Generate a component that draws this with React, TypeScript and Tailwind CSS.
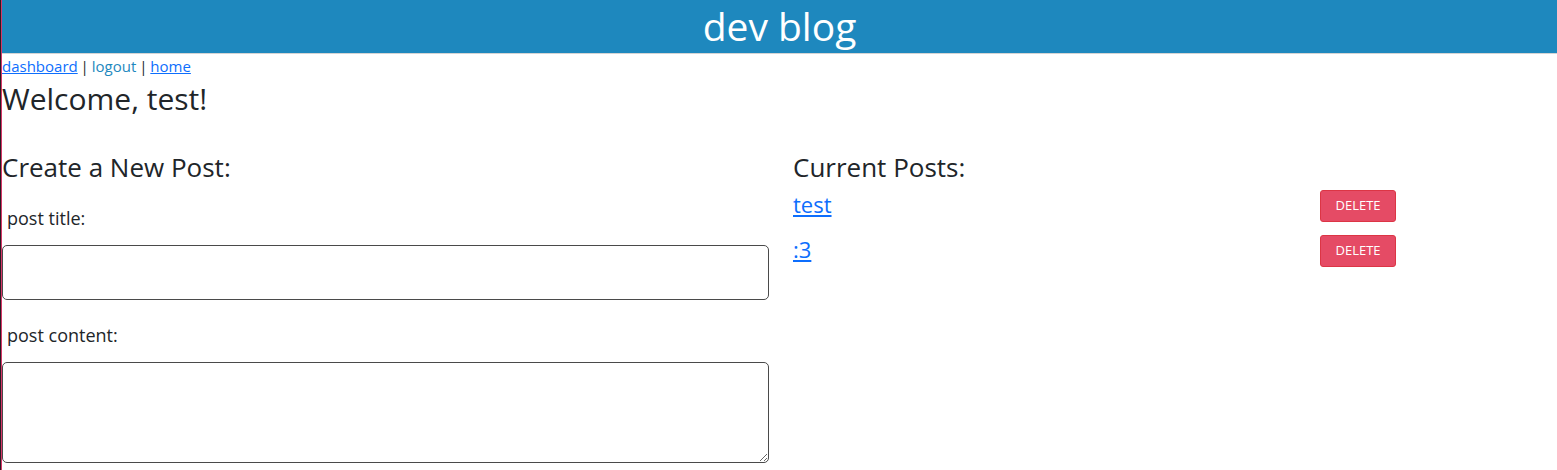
import React from "react";

const posts = [
  { id: 1, title: "test" },
  { id: 2, title: ":3" },
];

export default function App() {
  return (
    <div
      className="min-h-[470px] border-l border-[#2a1a22] bg-white text-[#212529]"
      style={{ fontFamily: '"Open Sans", "Noto Sans", sans-serif' }}
    >
      <div className="min-h-[470px] border-l border-[#d63868]">
        {/* Header */}
        <header className="h-[54px] border-b border-[#d4d4d4] bg-[#1e88be] text-center text-[39px] leading-[52px] text-white">
          dev blog
        </header>

        {/* Nav */}
        <nav className="text-[15px] leading-[24px] [word-spacing:-1px]">
          <a href="#" className="text-[#0d6efd] underline">
            dashboard
          </a>{" "}
          | <span className="text-[#1e88be]">logout</span> |{" "}
          <a href="#" className="text-[#0d6efd] underline">
            home
          </a>
        </nav>

        <h2 className="pt-[2px] text-[30px] leading-[38px]">Welcome, test!</h2>

        <div className="mt-[32px] grid grid-cols-[767px_603px] gap-[24px]">
          {/* Create post */}
          <section>
            <h3 className="text-[26px] leading-[34px]">Create a New Post:</h3>
            <form>
              <label className="block px-[5px] pt-[22px] pb-[15px] text-[18px] leading-[24px]">
                post title:
              </label>
              <input
                type="text"
                className="block h-[55px] w-full rounded-[5px] border border-[#4a4a4a] px-2 outline-none"
              />
              <label className="block px-[5px] pt-[23px] pb-[15px] text-[18px] leading-[24px]">
                post content:
              </label>
              <textarea className="block h-[101px] w-full rounded-[5px] border border-[#4a4a4a] px-2 outline-none" />
            </form>
          </section>

          {/* Current posts */}
          <section>
            <h3 className="text-[26px] leading-[34px]">Current Posts:</h3>
            <ul className="mt-[6px] flex flex-col gap-[13px]">
              {posts.map((post) => (
                <li key={post.id} className="flex items-center justify-between">
                  <a href="#" className="-mt-[4px] text-[22px] leading-[32px] text-[#0d6efd] underline">
                    {post.title}
                  </a>
                  <button className="h-[32px] w-[76px] rounded-[3px] border border-[#dc3545] bg-[#e54b65] text-[13px] uppercase text-white">
                    delete
                  </button>
                </li>
              ))}
            </ul>
          </section>
        </div>
      </div>
    </div>
  );
}
